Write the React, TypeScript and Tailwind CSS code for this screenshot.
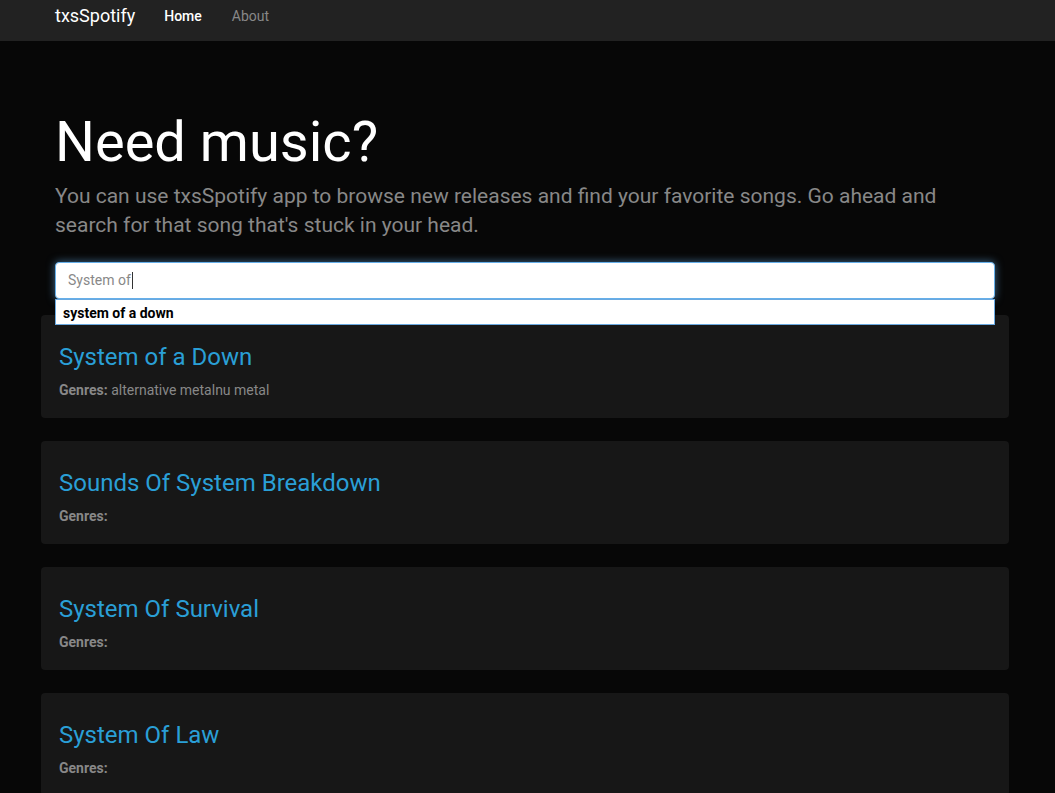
import React from 'react';

const artists = [
    { id: 1, name: 'System of a Down', genres: 'alternative metalnu metal' },
    { id: 2, name: 'Sounds Of System Breakdown', genres: '' },
    { id: 3, name: 'System Of Survival', genres: '' },
    { id: 4, name: 'System Of Law', genres: '' },
];

export default function App() {
    return (
        <div
            className="min-h-screen bg-[#070707] text-[#888]"
            style={{ fontFamily: 'Roboto, "Helvetica Neue", Arial, sans-serif' }}
        >
            {/* navbar */}
            <nav className="h-[41px] bg-[#222]">
                <div className="ml-[41px] flex w-[968px] items-start pt-[6px] leading-5">
                    <a className="px-[14px] text-[18px] text-white">txsSpotify</a>
                    <ul className="flex text-[14px]">
                        <li className="px-[15px] font-medium text-white">Home</li>
                        <li className="px-[15px] text-[#888]">About</li>
                    </ul>
                </div>
            </nav>

            <div className="ml-[41px] w-[968px]">
                {/* jumbotron */}
                <div className="px-[14px] pt-[68px]">
                    <h1 className="text-[56px] leading-[66px] font-normal text-white">
                        Need music?
                    </h1>
                    <p className="mt-[7px] text-[21px] leading-[29px] text-[#888]">
                        You can use txsSpotify app to browse new releases and find your
                        favorite songs. Go ahead and search for that song that's stuck in
                        your head.
                    </p>

                    <div className="relative mt-[22px]">
                        <div className="flex h-[37px] w-[940px] items-center rounded-[4px] border border-[#66afe9] bg-white pl-[12px] text-[14px] text-[#888] shadow-[0_0_8px_rgba(102,175,233,0.6)]">
                            System of
                            <span className="ml-[1px] inline-block h-[17px] w-[1px] bg-[#333]" />
                        </div>
                        <div className="absolute top-[37px] left-0 z-10 flex h-[26px] w-[940px] items-center border border-[#6aa9e0] bg-white pt-[2px] pl-[7px] text-[14px] font-bold text-black">
                            system of a down
                        </div>
                    </div>
                </div>

                {/* results */}
                <div className="mt-[16px] flex flex-col gap-[23px]">
                    {artists.map((a) => (
                        <div
                            key={a.id}
                            className="rounded-[4px] bg-[#171717] px-[18px] pt-[29px] pb-[18px]"
                        >
                            <h3 className="text-[24px] leading-[26px] text-[#2a9fd6]">
                                {a.name}
                            </h3>
                            <p className="mt-[10px] text-[14px] leading-5 text-[#888]">
                                <span className="font-bold">Genres:</span> {a.genres}
                            </p>
                        </div>
                    ))}
                </div>
            </div>
        </div>
    );
}
